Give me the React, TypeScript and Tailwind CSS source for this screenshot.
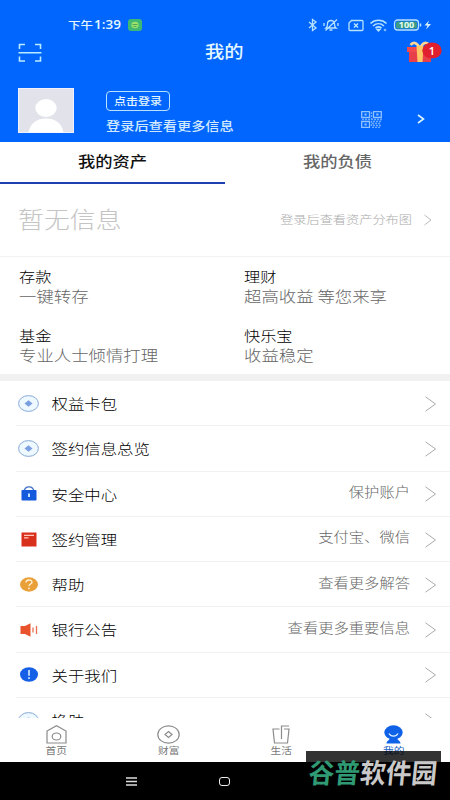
import type { ReactNode } from "react";
import clsx from "clsx";

type TRow = {
  label: string;
  note?: string;
  icon: ReactNode;
};

const products = [
  { title: "存款", desc: "一键转存" },
  { title: "理财", desc: "超高收益 等您来享" },
  { title: "基金", desc: "专业人士倾情打理" },
  { title: "快乐宝", desc: "收益稳定" },
];

const rows: TRow[] = [
  { label: "权益卡包", icon: <CoinIcon /> },
  { label: "签约信息总览", icon: <CoinIcon /> },
  { label: "安全中心", note: "保护账户", icon: <LockIcon /> },
  { label: "签约管理", note: "支付宝、微信", icon: <CardIcon /> },
  { label: "帮助", note: "查看更多解答", icon: <HelpIcon /> },
  { label: "银行公告", note: "查看更多重要信息", icon: <SpeakerIcon /> },
  { label: "关于我们", icon: <AboutIcon /> },
  { label: "换肤", icon: <CoinIcon /> },
];

const tabs = [
  { label: "首页", icon: <HomeIcon /> },
  { label: "财富", icon: <WealthIcon /> },
  { label: "生活", icon: <CupIcon /> },
  { label: "我的", icon: <MeIcon />, active: true },
];

export default function App() {
  return (
    <div className="relative flex h-[800px] w-[450px] flex-col overflow-hidden bg-white font-['Noto_Sans_CJK_SC',sans-serif]">
      <Header />
      <AssetTabs />
      <EmptyAssets />
      <div className="grid h-[117px] shrink-0 grid-cols-2 content-start gap-y-[1px] pt-[9px]">
        {products.map((item) => (
          <div key={item.title} className="h-[58px] pl-[19px]">
            <Text className="h-5 text-[16.2px] font-light text-black">
              {item.title}
            </Text>
            <Text className="h-5 text-[17.4px] font-light text-[#666]">
              {item.desc}
            </Text>
          </div>
        ))}
      </div>
      <div className="h-[7px] shrink-0 bg-[#f1f1f1]" />
      <div className="min-h-0 flex-1 overflow-hidden">
        {rows.map((row) => (
          <Row key={row.label} {...row} />
        ))}
      </div>
      <TabBar />
      <SystemNav />
      <Watermark />
    </div>
  );
}

// text is a little wider than it is tall everywhere on this screen
function Text({
  className,
  children,
}: {
  className?: string;
  children: ReactNode;
}) {
  return (
    <p
      className={clsx(
        "flex scale-y-[0.86] items-center leading-none whitespace-nowrap",
        className
      )}
    >
      {children}
    </p>
  );
}

function Header() {
  return (
    <header className="flex h-[142px] shrink-0 flex-col bg-[#0066fe] text-[#e4f6ff]">
      <div className="flex h-[38px] items-center pt-[12px] pr-[18px] pl-[68px]">
        <Text className="text-[12.5px] font-medium">
          下午
          <span className="mt-[2px] ml-[1px] font-['Open_Sans',sans-serif] text-[13.5px] font-semibold">
            1:39
          </span>
        </Text>
        <svg width="14" height="12" viewBox="0 0 14 12" className="ml-[7px]">
          <rect width="14" height="12" rx="3" fill="#3fb873" />
          <ellipse cx="7" cy="6" rx="3.6" ry="3.2" fill="#9be36c" />
          <path d="M4.5 5.5h5M5.5 7.5h3" stroke="#3a9a50" strokeWidth="0.8" />
        </svg>
        <StatusIcons />
      </div>
      <div className="flex h-[28px] items-center pr-[8px] pl-[18px]">
        <svg
          width="24"
          height="19"
          viewBox="0 0 24 19"
          fill="none"
          stroke="#b9ecff"
          strokeWidth="1.6"
        >
          <path d="M1.5 6V1.5H7M17 1.5h5.5V6M1.5 13.5V18H7M17 18h5.5v-4.500M.5 9.700h23" />
        </svg>
        <Text className="mb-[1px] ml-[163px] text-[19.3px] font-medium">
          我的
        </Text>
        <Gift />
      </div>
      <div className="flex flex-1 items-start pt-[22px] pl-[18px]">
        <svg width="56" height="45" viewBox="0 0 56 45">
          <rect width="56" height="45" fill="#e2e3ea" />
          <rect x="0.5" y="0.5" width="55" height="44" fill="none" stroke="#eef1fb" />
          <ellipse cx="28" cy="20" rx="10.7" ry="9" fill="#fff" />
          <path d="M10.5 44.5C12 35 19 30.5 28 30.5S44 35 45.500 44.500z" fill="#fff" />
        </svg>
        <div className="ml-[32px] pt-[3px]">
          <div className="flex h-[20px] w-[64px] items-center justify-center rounded-[4px] border-[1.5px] border-[#b6e2ff]">
            <Text className="mb-[1px] text-[12px] font-medium">点击登录</Text>
          </div>
          <Text className="mt-[5px] h-[20px] text-[14.2px] font-medium text-[#d0e9ff]">
            登录后查看更多信息
          </Text>
        </div>
        <QrIcon />
        <svg
          width="8"
          height="10"
          viewBox="0 0 8 10"
          fill="none"
          stroke="#d9f3ff"
          strokeWidth="1.6"
          className="mt-[26px] ml-[35px]"
        >
          <path d="M1 1l5.500 4L1 9" />
        </svg>
      </div>
    </header>
  );
}

function StatusIcons() {
  return (
    <svg
      width="124"
      height="14"
      viewBox="0 0 124 14"
      fill="none"
      stroke="#b5e2ff"
      strokeWidth="1.3"
      className="ml-auto"
    >
      <path d="M1 4l7 6-3.500 2.500v-11L8 4l-7 6" />
      <path d="M18 10h10c-1.500-1-1.500-2.500-1.500-4 0-2-1.500-3.500-3.500-3.500S19.500 4 19.500 6c0 1.500 0 3-1.500 4zM21.500 12h3M17.500 12.500L29 1.500M16 5v3M30 5v3" />
      <path d="M43.500 2.500H54q1 0 1 1v8q0 1-1 1H42q-1 0-1-1V5z" />
      <path d="M46 5.500l4 4M50 5.500l-4 4" strokeWidth="1.500" />
      <path
        d="M62.500 5.500c4.500-4.300 11.500-4.300 16 0M65 8c3.300-3 7.700-3 11 0M67.500 10c2-1.500 4-1.500 6 0"
        strokeWidth="1.600"
      />
      <path d="M69 11.500h3l-1.500 1.500z" fill="#b5e2ff" />
      <circle cx="77" cy="12" r="1.300" fill="#7fbaff" stroke="none" />
      <rect x="86.500" y="2" width="24" height="10" rx="3" />
      <rect x="88" y="3.500" width="21" height="7" rx="1.500" fill="#3c9b86" stroke="none" />
      <path d="M112.500 5.500v3" strokeWidth="1.500" />
      <text
        x="98.500"
        y="10"
        fill="#e8fff4"
        stroke="none"
        fontSize="8.500"
        fontWeight="700"
        textAnchor="middle"
        textLength="15.500"
        lengthAdjust="spacingAndGlyphs"
        fontFamily="Open Sans, sans-serif"
      >
        100
      </text>
      <path d="M121 2.500l-4.500 5h3L118 11.500l5-5.500h-3.200z" fill="#d9f3ff" stroke="none" />
    </svg>
  );
}

function Gift() {
  return (
    <svg width="35" height="22" viewBox="0 0 35 22" className="ml-auto">
      <path d="M2 8h22v13H2z" fill="#e8404a" />
      <path d="M0 6h26v5H0z" fill="#ee4a50" />
      <path
        d="M12.500 6.500C9.500 1 6 .8 3.500 4M13.500 6.500C16 1 19.500.8 22.500 4"
        fill="none"
        stroke="#ffd793"
        strokeWidth="2.600"
      />
      <path d="M9.500 5h7l-1 16h-5z" fill="#ffc765" />
      <ellipse cx="25" cy="9.500" rx="9.700" ry="8" fill="#e01f2f" />
      <text
        x="25"
        y="13.500"
        fill="#fff"
        fontSize="11"
        fontWeight="600"
        textAnchor="middle"
        fontFamily="Open Sans, sans-serif"
      >
        1
      </text>
    </svg>
  );
}

function QrIcon() {
  return (
    <svg
      width="21"
      height="17"
      viewBox="0 0 21 17"
      fill="none"
      stroke="#8fc2ff"
      strokeWidth="1.300"
      className="mt-[23px] ml-[127px]"
    >
      <path d="M.7.7h7.800v5.800H.7zM12.500.7h7.800v5.800h-7.800zM.7 10.500h7.800v5.800H.7z" />
      <path d="M3.500 3.500h2.200M15.300 3.500h2.200M3.500 13.400h2.200" strokeWidth="2" />
      <path
        d="M10.500 1v15M1 8.500h20M12 10.500h9M11 12.500h9M12 14.500h9M11 16.500h9"
        strokeDasharray="2 1"
        opacity="0.75"
      />
    </svg>
  );
}

function AssetTabs() {
  return (
    <div className="flex h-[42px] shrink-0 text-[17.3px] font-medium">
      <div className="flex flex-1 justify-center border-b-2 border-[#1d3fb0] text-[#111]">
        <Text className="h-[37px]">我的资产</Text>
      </div>
      <div className="flex flex-1 justify-center text-[#666]">
        <Text className="h-[37px]">我的负债</Text>
      </div>
    </div>
  );
}

function EmptyAssets() {
  return (
    <div className="flex h-[73px] shrink-0 items-center border-b border-[#f3f3f3] pr-[18px] pl-[18px]">
      <Text className="mb-[2px] text-[25.9px] font-light text-[#c4c4c4]">
        暂无信息
      </Text>
      <Text className="ml-auto text-[13.2px] font-light text-[#ababab]">
        登录后查看资产分布图
      </Text>
      <svg
        width="8"
        height="12"
        viewBox="0 0 8 12"
        fill="none"
        stroke="#bbb"
        className="ml-[12px]"
      >
        <path d="M.5 1L7 6 .5 11" />
      </svg>
    </div>
  );
}

function Row({ label, note, icon }: TRow) {
  return (
    <div className="ml-[16px] flex h-[45.300px] items-center border-b border-[#f1f1f1] pr-[14px]">
      <div className="flex w-[25px] justify-center">{icon}</div>
      <Text className="ml-[10.500px] text-[16.4px] font-light text-black">
        {label}
      </Text>
      <Text className="mr-[15px] mb-[4px] ml-auto text-[15.3px] font-light text-[#666]">
        {note}
      </Text>
      <svg
        width="11"
        height="16"
        viewBox="0 0 11 16"
        fill="none"
        stroke="#aaa"
        className="mt-[1px]"
      >
        <path d="M.5 .8L10.500 8 .5 15.200" />
      </svg>
    </div>
  );
}

function CoinIcon() {
  return (
    <svg width="21" height="17" viewBox="0 0 21 17">
      <ellipse cx="10.500" cy="8.500" rx="9.900" ry="7.900" fill="#eef8ff" stroke="#86a9d4" />
      <path d="M10.500 5.300l4 3.200-4 3.200-4-3.200z" fill="#7b9fe0" />
    </svg>
  );
}

function LockIcon() {
  return (
    <svg width="16" height="15" viewBox="0 0 16 15">
      <path d="M3 6C3.500-.8 12.500-.8 13 6" fill="none" stroke="#3e6fca" strokeWidth="1.300" />
      <rect x="0.500" y="4" width="15" height="10.500" rx="0.800" fill="#1559dc" />
      <path d="M8 7.500v3.500" stroke="#d5f1ff" strokeWidth="1.800" />
    </svg>
  );
}

function CardIcon() {
  return (
    <svg width="16" height="15" viewBox="0 0 16 15">
      <rect x="0.500" y="0.500" width="15" height="14" fill="#d9301c" />
      <path d="M3 3.300h10M3 5.800h4.500" stroke="#ffc9bd" strokeWidth="1.200" />
    </svg>
  );
}

function HelpIcon() {
  return (
    <svg width="18" height="15" viewBox="0 0 18 15">
      <ellipse cx="9" cy="7.500" rx="9" ry="7.200" fill="#eaa038" />
      <path
        d="M6 5.500c.2-3.400 6-3.200 6-.3C12 7 9 7 9 9.200"
        fill="none"
        stroke="#fff1d6"
        strokeWidth="1.300"
      />
      <circle cx="9" cy="11.400" r="0.900" fill="#fff1d6" />
    </svg>
  );
}

function SpeakerIcon() {
  return (
    <svg width="18" height="14" viewBox="0 0 18 14">
      <path d="M.5 3H5L10.500.3v13.400L5 11H.5z" fill="#e8532c" />
      <path d="M13 4.500v5M16.500 3v8" stroke="#e8704e" strokeWidth="1.300" />
    </svg>
  );
}

function AboutIcon() {
  return (
    <svg width="18" height="15" viewBox="0 0 18 15">
      <ellipse cx="9" cy="7.500" rx="9" ry="7.300" fill="#1560e6" />
      <path d="M9 3v5.800M9 10.300v1.700" stroke="#e6f6ff" strokeWidth="1.500" />
    </svg>
  );
}

function HomeIcon() {
  return (
    <svg width="21" height="19" viewBox="0 0 21 19" fill="none" stroke="#8b8b8b" strokeWidth="1.200">
      <path d="M1 6L10.500 .8 20 6v12H1z" />
      <ellipse cx="10.500" cy="11.500" rx="4.300" ry="3.500" />
    </svg>
  );
}

function WealthIcon() {
  return (
    <svg width="23" height="19" viewBox="0 0 23 19" fill="none" stroke="#8b8b8b" strokeWidth="1.200">
      <ellipse cx="11.500" cy="9.500" rx="10.700" ry="8.700" />
      <path d="M11.500 6.500L15 9.500l-3.500 3-3.500-3z" />
    </svg>
  );
}

function CupIcon() {
  return (
    <svg width="18" height="19" viewBox="0 0 18 19" fill="none" stroke="#8b8b8b" strokeWidth="1.200">
      <path d="M7.500 4H1l1.500 14h13L17 4h-5M9.500 14V1H17" />
    </svg>
  );
}

function MeIcon() {
  return (
    <svg width="19" height="19" viewBox="0 0 19 19">
      <ellipse cx="9.500" cy="7.500" rx="9.200" ry="7.200" fill="#0f62e8" />
      <path d="M6 13h7c0 2 3.500 2.500 3.500 5.500h-14C2.500 15.500 6 15 6 13z" fill="#0f62e8" />
      <path d="M5 8.500c2 3.500 7 3.500 9 0" fill="none" stroke="#dff1ff" strokeWidth="1.300" />
    </svg>
  );
}

function TabBar() {
  return (
    <nav className="flex h-[44px] shrink-0 bg-white pt-[7px]">
      {tabs.map((tab) => (
        <div key={tab.label} className="flex flex-1 flex-col items-center">
          {tab.icon}
          <Text
            className={clsx(
              "h-[13px] text-[10.7px]",
              tab.active ? "text-[#1d5fc4]" : "text-[#777]"
            )}
          >
            {tab.label}
          </Text>
        </div>
      ))}
    </nav>
  );
}

function SystemNav() {
  return (
    <div className="flex h-[38px] shrink-0 items-center bg-black pl-[126px]">
      <svg width="11" height="9" viewBox="0 0 11 9" stroke="#ddd" strokeWidth="1.500">
        <path d="M0 1h11M0 4.500h11M0 8h11" />
      </svg>
      <div className="ml-[82px] h-[9px] w-[11px] rounded-[3px] border-[1.500px] border-[#eee]" />
      <svg
        width="7"
        height="10"
        viewBox="0 0 7 10"
        fill="none"
        stroke="#aaa"
        className="ml-[86px]"
      >
        <path d="M6 .5L1 5l5 4.500" />
      </svg>
    </div>
  );
}

function Watermark() {
  return (
    <div className="absolute top-[751px] left-[306px] flex h-[40px] w-[135px] items-center justify-center bg-black/80">
      <p className="scale-y-105 -skew-x-6 text-[25.700px] leading-none font-bold whitespace-nowrap text-[#c9c9c9]">
        <span className="text-[#2f9a73]">谷普</span>软件园
      </p>
    </div>
  );
}
